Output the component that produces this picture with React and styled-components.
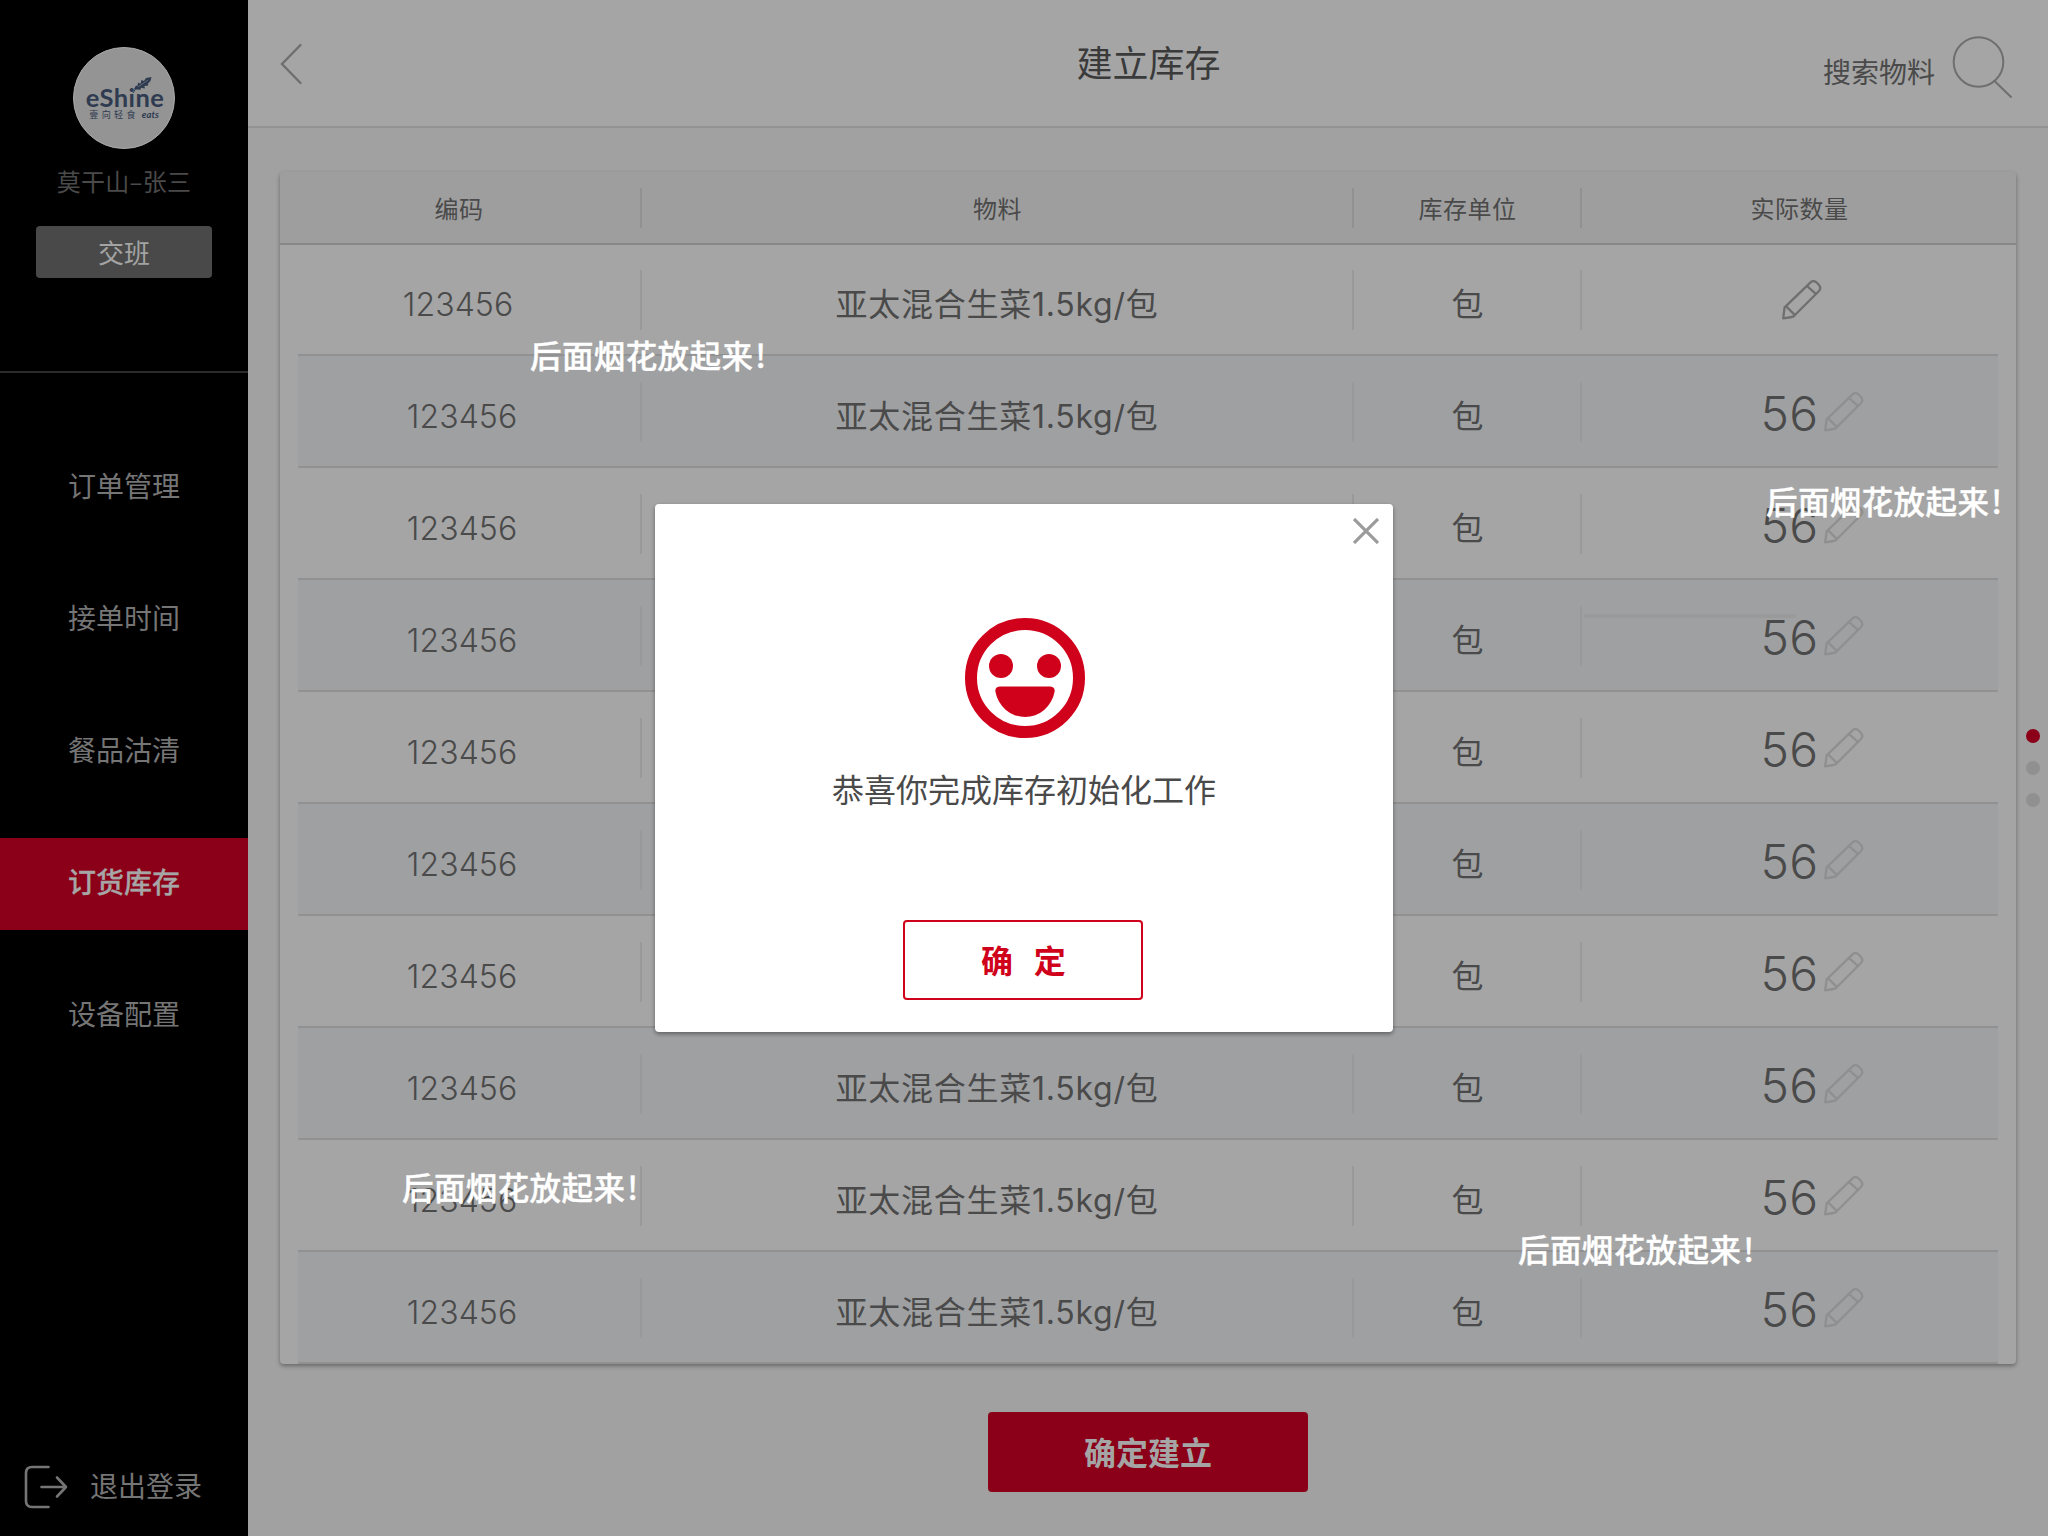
import React from "react";
import styled, { createGlobalStyle } from "styled-components";

const ink = "#4a4a4a";
const surface = "#a5a5a5";
const brandDim = "#8b0018";
const brand = "#d0021b";

const GlobalStyle = createGlobalStyle`
  *, *::before, *::after { box-sizing: border-box; }
  body {
    margin: 0;
    background: #a1a1a1;
    color: ${ink};
    font-family: "Noto Sans CJK SC", "Noto Sans", sans-serif;
  }
  button { font-family: inherit; padding: 0; cursor: pointer; }
`;

const Screen = styled.div`
  position: relative;
  display: flex;
  width: 2048px;
  height: 1536px;
  overflow: hidden;
`;

/* ---------- sidebar ---------- */

const Sidebar = styled.aside`
  display: flex;
  flex-direction: column;
  width: 248px;
  flex: none;
  background: #000;
`;

const Profile = styled.section`
  display: flex;
  flex-direction: column;
  align-items: center;
  height: 373px;
  padding-top: 47px;
  border-bottom: 2px solid #2b2b2b;
`;

const Avatar = styled.div`
  display: flex;
  flex-direction: column;
  align-items: center;
  width: 102px;
  height: 102px;
  padding-top: 34px;
  border: 1px solid #a9a9a9;
  border-radius: 50%;
  background: #949494;
  color: #2e3b50;
`;

const Wordmark = styled.div`
  position: relative;
  margin-left: 2px;
  font: 700 25.5px/30px Lato, sans-serif;
  letter-spacing: 0.4px;
`;

const Leaf = styled.svg`
  position: absolute;
  left: 45px;
  top: -5px;
`;

const Tagline = styled.div`
  display: flex;
  gap: 6px;
  margin-top: -2px;
  font-size: 9px;
  line-height: 10px;
`;

const TaglineCn = styled.span`
  letter-spacing: 3.4px;
  margin-right: -3px;
`;

const TaglineEn = styled.span`
  font: italic 700 9.5px/10px Lato, sans-serif;
`;

const UserName = styled.div`
  margin: 14px 0 0 0;
  font-size: 24px;
  letter-spacing: 0.3px;
  line-height: 36px;
`;

const ShiftButton = styled.button`
  width: 176px;
  height: 52px;
  margin-top: 27px;
  padding-bottom: 1px;
  border: 0;
  border-radius: 4px;
  background: #494949;
  color: #a3a3a3;
  font-size: 26px;
  line-height: 51px;
`;

const Nav = styled.nav`
  display: flex;
  flex-direction: column;
  gap: 40px;
  margin-top: 69px;
`;

const NavItem = styled.a`
  height: 92px;
  line-height: 86px;
  text-align: center;
  font-size: 28px;
  font-weight: ${(p) => (p.$active ? 500 : 400)};
  color: ${(p) => (p.$active ? "#a6a6a6" : "#757575")};
  background: ${(p) => (p.$active ? brandDim : "transparent")};
  -webkit-text-stroke: ${(p) => (p.$active ? 0.3 : 0)}px currentColor;
`;

const Logout = styled.a`
  display: flex;
  align-items: center;
  gap: 22px;
  margin: auto 0 27px 24px;
  color: #757575;
  font-size: 28px;
  line-height: 44px;
`;

const LogoutLabel = styled.span`
  margin-top: -4px;
`;

/* ---------- main ---------- */

const Main = styled.main`
  display: flex;
  flex-direction: column;
  flex: 1;
  align-items: center;
`;

const TopBar = styled.header`
  display: grid;
  grid-template-columns: 1fr auto 1fr;
  align-items: center;
  align-self: stretch;
  height: 128px;
  padding: 0 35px 0 32px;
  background: ${surface};
  border-bottom: 2px solid #929292;
`;

const BackIcon = styled.svg`
  margin-top: 2px;
`;

const Title = styled.h1`
  margin: -4px 0 0 4px;
  font-size: 36px;
  font-weight: 400;
  line-height: 52px;
  color: #3a3a3a;
`;

const Search = styled.div`
  display: flex;
  justify-content: flex-end;
  align-items: center;
  gap: 16px;
  padding-top: 16px;
  font-size: 28px;
  line-height: 40px;
`;

const SearchIcon = styled.svg`
  margin-top: -6px;
`;

const Card = styled.section`
  width: 1736px;
  height: 1192px;
  margin-top: 44px;
  flex: none;
  background: ${surface};
  border-radius: 4px;
  box-shadow: 0 2px 4px rgba(0, 0, 0, 0.36);
`;

const HeadRow = styled.div`
  display: grid;
  grid-template-columns: 360px 712px 228px 1fr;
  height: 73px;
  background: #9e9e9e;
  border-bottom: 2px solid #878787;
  border-radius: 4px 4px 0 0;
`;

const HeadCell = styled.div`
  margin: 16px 0 15px;
  padding: 0 ${(p) => (p.$first ? 3 : 0)}px 0 1px;
  line-height: 40px;
  text-align: center;
  font-size: 24px;
  letter-spacing: 0.5px;
  border-left: ${(p) => (p.$first ? 0 : "2px solid #919191")};
`;

const Rows = styled.div`
  padding: 0 18px;
`;

const Row = styled.div`
  display: grid;
  grid-template-columns: 342px 712px 228px 1fr;
  height: ${(p) => (p.$first ? 111 : 112)}px;
  padding-top: ${(p) => (p.$first ? 25 : 26)}px;
  background: ${(p) => (p.$shade ? "#9fa0a2" : "transparent")};
  border-bottom: 2px solid #919191;
`;

const Cell = styled.div`
  display: flex;
  justify-content: center;
  height: 60px;
  padding: 0 ${(p) => p.$right || 0}px 0 ${(p) => p.$left || 0}px;
  border-left: ${(p) => (p.$first ? 0 : "2px solid #999")};
  font-family: Inter, "Noto Sans CJK SC", sans-serif;
  font-size: 32px;
  line-height: 69px;
  letter-spacing: 0.75px;
`;

const Code = styled.span`
  font-weight: 300;
  line-height: 70px;
  letter-spacing: 0.1px;
`;

const Amount = styled.span`
  font-size: 48px;
  font-weight: 300;
  line-height: 63px;
  letter-spacing: 0.4px;
`;

const Pencil = styled.svg`
  flex: none;
  margin: 10px 0 0 ${(p) => (p.$offset ? 5 : 0)}px;
`;

const StrayRule = styled.i`
  position: absolute;
  left: 1584px;
  top: 614px;
  width: 212px;
  height: 4px;
  background: #9a9a9a;
`;

const SubmitButton = styled.button`
  width: 320px;
  height: 80px;
  margin-top: 48px;
  padding-bottom: 3px;
  border: 0;
  border-radius: 4px;
  background: ${brandDim};
  color: #a5a5a5;
  font-size: 32px;
  font-weight: 700;
`;

const Pager = styled.div`
  position: absolute;
  left: 2026px;
  top: 729px;
  display: flex;
  flex-direction: column;
  gap: 18px;
`;

const Dot = styled.span`
  width: 14px;
  height: 14px;
  border-radius: 50%;
  background: ${(p) => (p.$active ? brandDim : "#909090")};
`;

/* ---------- overlay ---------- */

const Firework = styled.div`
  position: absolute;
  left: ${(p) => p.$x}px;
  top: ${(p) => p.$y}px;
  color: #fff;
  font-size: 31.5px;
  font-weight: 500;
  letter-spacing: 0.4px;
  line-height: 45px;
  white-space: nowrap;
  -webkit-text-stroke: 0.4px #fff;
`;

const Bang = styled.span`
  margin-left: 2px;
`;

const Dialog = styled.section`
  position: absolute;
  left: 655px;
  top: 504px;
  display: flex;
  flex-direction: column;
  align-items: center;
  width: 738px;
  height: 528px;
  padding: 14px;
  background: #fff;
  border-radius: 4px;
  box-shadow: 0 2px 4px rgba(0, 0, 0, 0.4);
`;

const CloseIcon = styled.svg`
  align-self: flex-end;
`;

const Smile = styled.svg`
  margin: 74px 0 0 2px;
`;

const Message = styled.p`
  margin: 28px 0 0;
  font-size: 32px;
  line-height: 45px;
`;

const OkButton = styled.button`
  width: 240px;
  height: 80px;
  margin: 109px 2px 0 0;
  padding: 0 0 3px 1px;
  border: 2px solid ${brand};
  border-radius: 4px;
  background: #fff;
  color: ${brand};
  font-size: 32px;
  font-weight: 700;
  word-spacing: 13.5px;
`;

const navItems = ["订单管理", "接单时间", "餐品沽清", "订货库存", "设备配置"];
const heads = ["编码", "物料", "库存单位", "实际数量"];
const items = [null, 56, 56, 56, 56, 56, 56, 56, 56, 56].map((amount) => ({
  code: "123456",
  name: "亚太混合生菜1.5kg/包",
  unit: "包",
  amount,
}));
const fireworks = [
  [530, 332],
  [1766, 478],
  [402, 1164],
  [1518, 1226],
];

function PencilIcon({ faint }) {
  return (
    <Pencil
      $offset={faint}
      width="40"
      height="40"
      viewBox="0 0 40 40"
      fill="none"
      stroke={faint ? "#8f8f8f" : "#6f6f6f"}
      strokeWidth="2.3"
      strokeLinejoin="round"
    >
      <path d="M1.2 38.4 L2.6 27.4 L28.3 2.6 Q31.2-.2 34.4 2.3 L36.6 4.5 Q39.8 8 37 11 L12.2 35.8 Q11.2 36.7 9.8 37 Z" />
      <path d="M3.8 26 L13.2 35.4 M25 6 L34.4 14.4" />
    </Pencil>
  );
}

export default function App() {
  return (
    <Screen>
      <GlobalStyle />
      <Sidebar>
        <Profile>
          <Avatar>
            <Wordmark>
              eShine
              <Leaf width="22" height="18" viewBox="0 0 22 18">
                <path
                  d="M3 12 L5 8.5 L6.5 9 L7 5.5 L9.5 6.8 L10.5 3 L13 4 L15 1 L20.5 0 L19.5 4 L17 6.5 L17.2 8.5 L13.5 9 L13.8 11.5 L10 10.8 L9.5 12.8 L5.5 12.5 Z"
                  fill="#2e3b50"
                />
                <path d="M2 16 Q4 11 9 8.5 L17 3" fill="none" stroke="#2e3b50" strokeWidth="1" />
                <path d="M7 10 L17 3" stroke="#949494" strokeWidth=".5" />
              </Leaf>
            </Wordmark>
            <Tagline>
              <TaglineCn>壹向轻食</TaglineCn>
              <TaglineEn>eats</TaglineEn>
            </Tagline>
          </Avatar>
          <UserName>莫干山–张三</UserName>
          <ShiftButton>交班</ShiftButton>
        </Profile>
        <Nav>
          {navItems.map((label) => (
            <NavItem key={label} $active={label === "订货库存"}>
              {label}
            </NavItem>
          ))}
        </Nav>
        <Logout>
          <svg
            width="44"
            height="44"
            viewBox="0 0 44 44"
            fill="none"
            stroke="currentColor"
            strokeWidth="2.6"
            strokeLinecap="round"
            strokeLinejoin="round"
          >
            <path d="M24.5 2 H8 Q2 2 2 8 V36 Q2 42 8 42 H24.5" />
            <path d="M17.5 22 H42 M33 12.5 L42 22 L33 31.5" />
          </svg>
          <LogoutLabel>退出登录</LogoutLabel>
        </Logout>
      </Sidebar>

      <Main>
        <TopBar>
          <BackIcon width="24" height="42" viewBox="0 0 24 42" fill="none" stroke="#6f6f6f" strokeWidth="2.4" strokeLinecap="round">
            <path d="M20.5 2 L2 21 L20.5 40" />
          </BackIcon>
          <Title>建立库存</Title>
          <Search>
            搜索物料
            <SearchIcon width="62" height="64" viewBox="0 0 62 64" fill="none" stroke="#6f6f6f" strokeWidth="2" strokeLinecap="round">
              <circle cx="27.5" cy="26" r="24.8" />
              <path d="M43.5 45 L60 61" />
            </SearchIcon>
          </Search>
        </TopBar>

        <Card>
          <HeadRow>
            {heads.map((label, i) => (
              <HeadCell key={label} $first={i === 0}>
                {label}
              </HeadCell>
            ))}
          </HeadRow>
          <Rows>
            {items.map((item, i) => (
              <Row key={i} $first={i === 0} $shade={i % 2 === 1}>
                <Cell $first $right={i === 0 ? 22 : 14}>
                  <Code>{item.code}</Code>
                </Cell>
                <Cell>{item.name}</Cell>
                <Cell $left={2}>{item.unit}</Cell>
                <Cell $left={i === 0 ? 23 : 44}>
                  {item.amount && <Amount>{item.amount}</Amount>}
                  <PencilIcon faint={item.amount !== null} />
                </Cell>
              </Row>
            ))}
          </Rows>
        </Card>
        <SubmitButton>确定建立</SubmitButton>
      </Main>

      <StrayRule />
      <Pager>
        <Dot $active />
        <Dot />
        <Dot />
      </Pager>

      <Dialog>
        <CloseIcon width="26" height="26" viewBox="0 0 26 26" stroke="#9b9b9b" strokeWidth="3.2">
          <path d="M1 1 L25 25 M25 1 L1 25" />
        </CloseIcon>
        <Smile width="120" height="120" viewBox="0 0 120 120" fill={brand}>
          <circle cx="60" cy="60" r="54" fill="none" stroke={brand} strokeWidth="12" />
          <circle cx="36" cy="48" r="12" />
          <circle cx="84" cy="48" r="12" />
          <path d="M34.5 68.4 H85.5 Q90.4 68.8 89.5 74 A30 30.5 0 0 1 30.5 74 Q29.6 68.8 34.5 68.4 Z" />
        </Smile>
        <Message>恭喜你完成库存初始化工作</Message>
        <OkButton>确 定</OkButton>
      </Dialog>

      {fireworks.map(([x, y]) => (
        <Firework key={x} $x={x} $y={y}>
          后面烟花放起来<Bang>!</Bang>
        </Firework>
      ))}
    </Screen>
  );
}
